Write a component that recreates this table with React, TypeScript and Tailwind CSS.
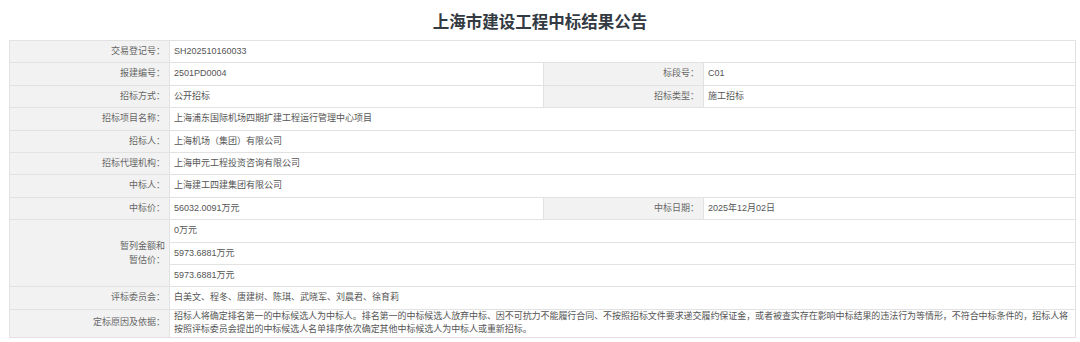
import React from 'react'

// 公告表格里的行
type Row =
  | { kind: 'single'; label: string; value: string }
  | { kind: 'pair'; label: string; value: string; label2: string; value2: string }

const TOP_ROWS: Row[] = [
  { kind: 'single', label: '交易登记号：', value: 'SH202510160033' },
  { kind: 'pair', label: '报建编号：', value: '2501PD0004', label2: '标段号：', value2: 'C01' },
  { kind: 'pair', label: '招标方式：', value: '公开招标', label2: '招标类型：', value2: '施工招标' },
  { kind: 'single', label: '招标项目名称：', value: '上海浦东国际机场四期扩建工程运行管理中心项目' },
  { kind: 'single', label: '招标人：', value: '上海机场（集团）有限公司' },
  { kind: 'single', label: '招标代理机构：', value: '上海申元工程投资咨询有限公司' },
  { kind: 'single', label: '中标人：', value: '上海建工四建集团有限公司' },
  { kind: 'pair', label: '中标价：', value: '56032.0091万元', label2: '中标日期：', value2: '2025年12月02日' },
]

const PROVISIONAL = ['0万元', '5973.6881万元', '5973.6881万元']

const REASON_1 =
  '招标人将确定排名第一的中标候选人为中标人。排名第一的中标候选人放弃中标、因不可抗力不能履行合同、不按照招标文件要求递交履约保证金，或者被查实存在影响中标结果的违法行为等情形，不符合中标条件的，招标人将'
const REASON_2 = '按照评标委员会提出的中标候选人名单排序依次确定其他中标候选人为中标人或重新招标。'

const labelCls = 'border border-[#e2e2e2] bg-[#f2f2f2] text-right pr-[4px] pl-[4px] text-[#666] align-middle'
const valueCls = 'border border-[#e2e2e2] bg-white text-left pl-[4px] pr-[4px] text-[#555] align-middle'

export default function App() {
  return (
    <div
      className="w-[1080px] h-[342px] bg-white overflow-hidden"
      style={{ fontFamily: '"Liberation Sans", "Noto Sans CJK SC", sans-serif' }}
    >
      {/* 标题 */}
      <div className="h-[40px] flex items-center justify-center pt-[4px]">
        <h1 className="text-[16.5px] leading-[20px] font-bold text-[#333a42]">
          上海市建设工程中标结果公告
        </h1>
      </div>

      {/* 表格 */}
      <table className="ml-[9px] w-[1066px] table-fixed border-collapse text-[9px] leading-[13.4px]">
        <colgroup>
          <col className="w-[160px]" />
          <col className="w-[374px]" />
          <col className="w-[160px]" />
          <col className="w-[372px]" />
        </colgroup>
        <tbody>
          {TOP_ROWS.map((r) =>
            r.kind === 'single' ? (
              <tr key={r.label} className="h-[22.4px]">
                <td className={labelCls}>{r.label}</td>
                <td className={valueCls} colSpan={3}>
                  {r.value}
                </td>
              </tr>
            ) : (
              <tr key={r.label} className="h-[22.4px]">
                <td className={labelCls}>{r.label}</td>
                <td className={valueCls}>{r.value}</td>
                <td className={labelCls}>{r.label2}</td>
                <td className={valueCls}>{r.value2}</td>
              </tr>
            )
          )}

          {PROVISIONAL.map((v, i) => (
            <tr key={i} className="h-[22.4px]">
              {i === 0 && (
                <td className={labelCls + ' leading-[14px]'} rowSpan={3}>
                  暂列金额和
                  <br />
                  暂估价：
                </td>
              )}
              <td className={valueCls} colSpan={3}>
                {v}
              </td>
            </tr>
          ))}

          <tr className="h-[22.4px]">
            <td className={labelCls}>评标委员会：</td>
            <td className={valueCls} colSpan={3}>
              白美文、程冬、唐建树、陈琪、武晓军、刘晨君、徐育莉
            </td>
          </tr>

          <tr>
            <td className={labelCls}>定标原因及依据：</td>
            <td className={valueCls + ' py-0 pr-0 whitespace-nowrap tracking-[-0.06px]'} colSpan={3}>
              {REASON_1}
              <br />
              {REASON_2}
            </td>
          </tr>
        </tbody>
      </table>
    </div>
  )
}
